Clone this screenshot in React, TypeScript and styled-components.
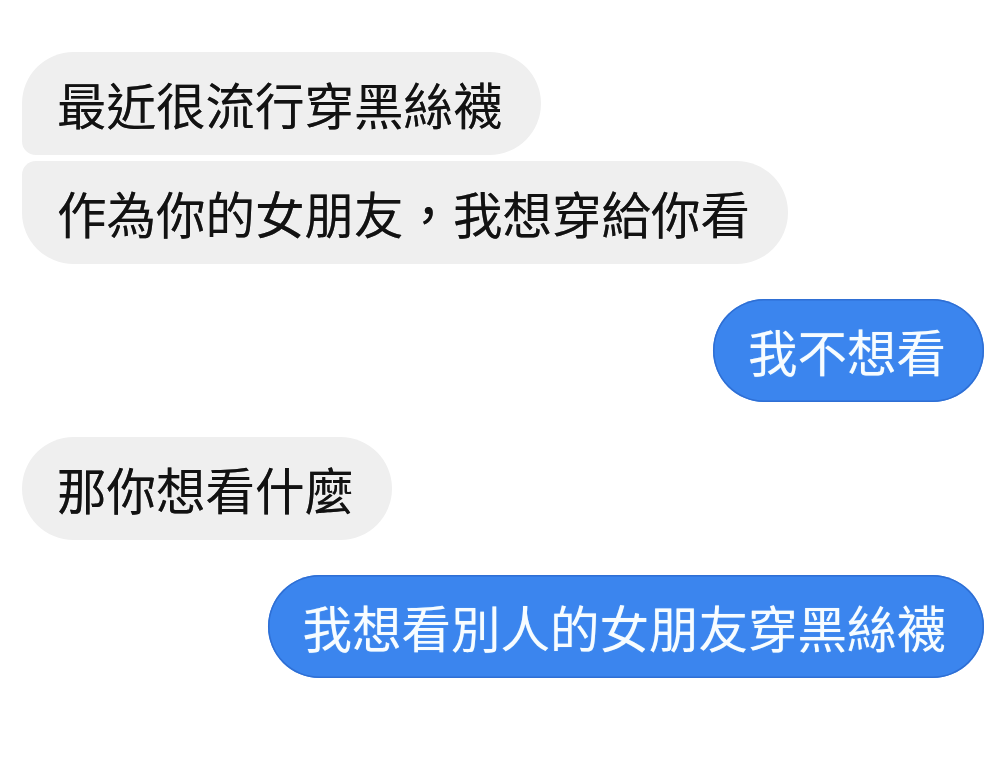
import React from "react";
import styled, { createGlobalStyle, css } from "styled-components";

const GlobalStyle = createGlobalStyle`
  html, body {
    margin: 0;
    padding: 0;
    background: #ffffff;
  }
  body {
    font-family: "Noto Sans CJK TC", "Noto Sans CJK SC", "Noto Sans", sans-serif;
  }
`;

const Thread = styled.main`
  width: 989px;
  height: 783px;
  box-sizing: border-box;
  padding: 52px 5px 0 22px;
  display: flex;
  flex-direction: column;
  background: #ffffff;
`;

const Group = styled.section<{ $mine?: boolean }>`
  display: flex;
  flex-direction: column;
  align-items: ${(p) => (p.$mine ? "flex-end" : "flex-start")};
  gap: 6px;
  margin-bottom: 35px;
`;

type Pos = "single" | "first" | "last";

const radius = (mine: boolean, pos: Pos) => {
  const big = "52px";
  const small = "14px";
  const topJoin = pos === "last" ? small : big;
  const bottomJoin = pos === "first" ? small : big;
  // top-left, top-right, bottom-right, bottom-left
  return mine
    ? `${big} ${topJoin} ${bottomJoin} ${big}`
    : `${topJoin} ${big} ${big} ${bottomJoin}`;
};

const Bubble = styled.div<{ $mine?: boolean; $pos?: Pos }>`
  box-sizing: border-box;
  height: 103px;
  padding: 0 38px 0 35px;
  display: flex;
  align-items: center;
  font-size: 49.5px;
  line-height: 1;
  white-space: nowrap;
  letter-spacing: 0;
  border-radius: ${(p) => radius(!!p.$mine, p.$pos ?? "single")};
  ${(p) =>
    p.$mine
      ? css`
          background: #3b85ee;
          color: #f7fcff;
          box-shadow: inset 0 0 0 1.5px #2f6fd4;
          text-shadow: 0 0 1px rgba(190, 235, 255, 0.6);
        `
      : css`
          background: #efefef;
          color: #121212;
          text-shadow: 0 0 0.6px rgba(0, 0, 0, 0.6);
        `}
`;

export default function App() {
  return (
    <>
      <GlobalStyle />
      <Thread>
        <Group>
          <Bubble $pos="first">最近很流行穿黑絲襪</Bubble>
          <Bubble $pos="last">作為你的女朋友，我想穿給你看</Bubble>
        </Group>
        <Group $mine>
          <Bubble $mine>我不想看</Bubble>
        </Group>
        <Group>
          <Bubble>那你想看什麼</Bubble>
        </Group>
        <Group $mine>
          <Bubble $mine>我想看別人的女朋友穿黑絲襪</Bubble>
        </Group>
      </Thread>
    </>
  );
}
